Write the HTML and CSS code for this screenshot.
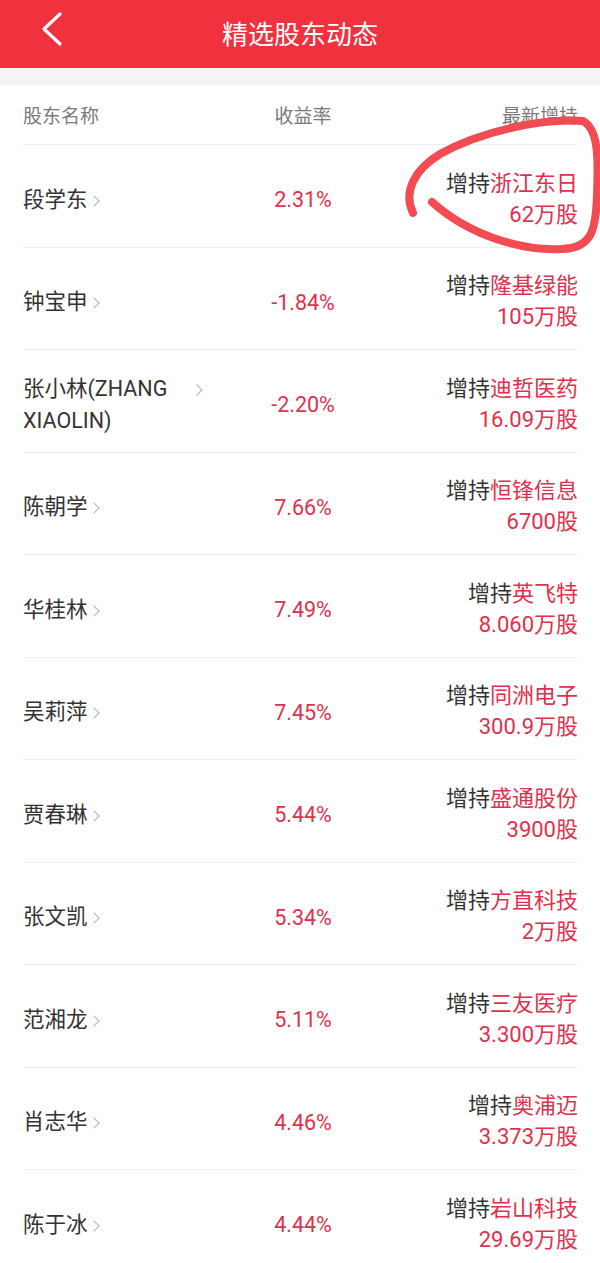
FILE: index.html
```html
<!DOCTYPE html>
<html lang="zh-CN">
<head>
    <meta charset="UTF-8">
    <meta name="viewport" content="width=device-width, initial-scale=1.0">
    <title>精选股东动态</title>
    <link rel="stylesheet" href="styles.css">
</head>
<body>
    <div class="topbar">
        <svg class="back" width="24" height="36" viewBox="0 0 24 36">
            <polyline points="20,3 4,18 20,33" fill="none" stroke="#fff" stroke-width="3.2" stroke-linecap="round" stroke-linejoin="round"/>
        </svg>
        <div class="title">精选股东动态</div>
    </div>
    <div class="gap"></div>

    <div class="list">
        <div class="head">
            <div>股东名称</div>
            <div class="mid">收益率</div>
            <div class="right">最新增持</div>
        </div>

        <div class="row">
            <div class="name"><span class="txt">段学东</span><span class="arrow"></span></div>
            <div class="rate">2.31%</div>
            <div class="hold"><div>增持<span class="stock">浙江东日</span></div><div class="stock">62万股</div></div>
        </div>
        <div class="row">
            <div class="name"><span class="txt">钟宝申</span><span class="arrow"></span></div>
            <div class="rate">-1.84%</div>
            <div class="hold"><div>增持<span class="stock">隆基绿能</span></div><div class="stock">105万股</div></div>
        </div>
        <div class="row">
            <div class="name"><span class="txt wide">张小林(ZHANG XIAOLIN)</span><span class="arrow"></span></div>
            <div class="rate">-2.20%</div>
            <div class="hold"><div>增持<span class="stock">迪哲医药</span></div><div class="stock">16.09万股</div></div>
        </div>
        <div class="row">
            <div class="name"><span class="txt">陈朝学</span><span class="arrow"></span></div>
            <div class="rate">7.66%</div>
            <div class="hold"><div>增持<span class="stock">恒锋信息</span></div><div class="stock">6700股</div></div>
        </div>
        <div class="row">
            <div class="name"><span class="txt">华桂林</span><span class="arrow"></span></div>
            <div class="rate">7.49%</div>
            <div class="hold"><div>增持<span class="stock">英飞特</span></div><div class="stock">8.060万股</div></div>
        </div>
        <div class="row">
            <div class="name"><span class="txt">吴莉萍</span><span class="arrow"></span></div>
            <div class="rate">7.45%</div>
            <div class="hold"><div>增持<span class="stock">同洲电子</span></div><div class="stock">300.9万股</div></div>
        </div>
        <div class="row">
            <div class="name"><span class="txt">贾春琳</span><span class="arrow"></span></div>
            <div class="rate">5.44%</div>
            <div class="hold"><div>增持<span class="stock">盛通股份</span></div><div class="stock">3900股</div></div>
        </div>
        <div class="row">
            <div class="name"><span class="txt">张文凯</span><span class="arrow"></span></div>
            <div class="rate">5.34%</div>
            <div class="hold"><div>增持<span class="stock">方直科技</span></div><div class="stock">2万股</div></div>
        </div>
        <div class="row">
            <div class="name"><span class="txt">范湘龙</span><span class="arrow"></span></div>
            <div class="rate">5.11%</div>
            <div class="hold"><div>增持<span class="stock">三友医疗</span></div><div class="stock">3.300万股</div></div>
        </div>
        <div class="row">
            <div class="name"><span class="txt">肖志华</span><span class="arrow"></span></div>
            <div class="rate">4.46%</div>
            <div class="hold"><div>增持<span class="stock">奥浦迈</span></div><div class="stock">3.373万股</div></div>
        </div>
        <div class="row">
            <div class="name"><span class="txt">陈于冰</span><span class="arrow"></span></div>
            <div class="rate">4.44%</div>
            <div class="hold"><div>增持<span class="stock">岩山科技</span></div><div class="stock">29.69万股</div></div>
        </div>
    </div>

    <!-- hand drawn mark over the first row -->
    <svg class="mark" width="600" height="300" viewBox="0 0 600 300">
        <path d="M413 213 C403 192 414 170 440 154 C480 132 540 118 583 121 C600 130 598 165 597 195 C596 230 592 248 562 249 C522 251 470 236 432 202" fill="none" stroke="#f24b52" stroke-width="8" stroke-linecap="round"/>
    </svg>
</body>
</html>
```

FILE: styles.css
```css
* {
    box-sizing: border-box;
}
body {
    margin: 0;
    background: #fff;
    font-family: Roboto, "Noto Sans CJK SC", sans-serif;
    color: #333;
    overflow: hidden;
}
.topbar {
    position: relative;
    height: 68px;
    background-color: #f1313d;
    display: flex;
    align-items: center;
    justify-content: center;
}
.back {
    position: absolute;
    left: 40px;
    top: 11px;
}
.title {
    color: #fff;
    font-size: 26px;
    margin-top: -4px;
}
.gap {
    height: 17px;
    background-color: #f4f4f4;
}
.list {
    padding: 0 22px 0 23px;
}
.head, .row {
    display: grid;
    grid-template-columns: 190px 1fr 185px;
    align-items: center;
    border-bottom: 1px solid #eeeeee;
}
.head {
    height: 60px;
    font-size: 19px;
    color: #7a7a7a;
}
.mid {
    text-align: center;
}
.right {
    text-align: right;
}
.row {
    height: 102.5px;
    padding-top: 6px;
    font-size: 21.5px;
}
.name {
    display: flex;
    align-items: flex-start;
    line-height: 32px;
    margin-top: 2px;
    color: #333;
}
.txt.wide {
    width: 168px;
}
.arrow {
    flex-shrink: 0;
    width: 8px;
    height: 8px;
    margin: 13px 0 0 2px;
    border-top: 1.3px solid #b0b0b0;
    border-right: 1.3px solid #b0b0b0;
    transform: rotate(45deg);
}
.txt.wide + .arrow {
    margin-left: 2px;
}
.rate {
    text-align: center;
    margin-top: 2px;
    color: #e1304b;
}
.hold {
    text-align: right;
    font-size: 22px;
    line-height: 31px;
    color: #333;
}
.stock {
    color: #e1304b;
}
.mark {
    position: absolute;
    left: 0;
    top: 0;
    pointer-events: none;
}
```
